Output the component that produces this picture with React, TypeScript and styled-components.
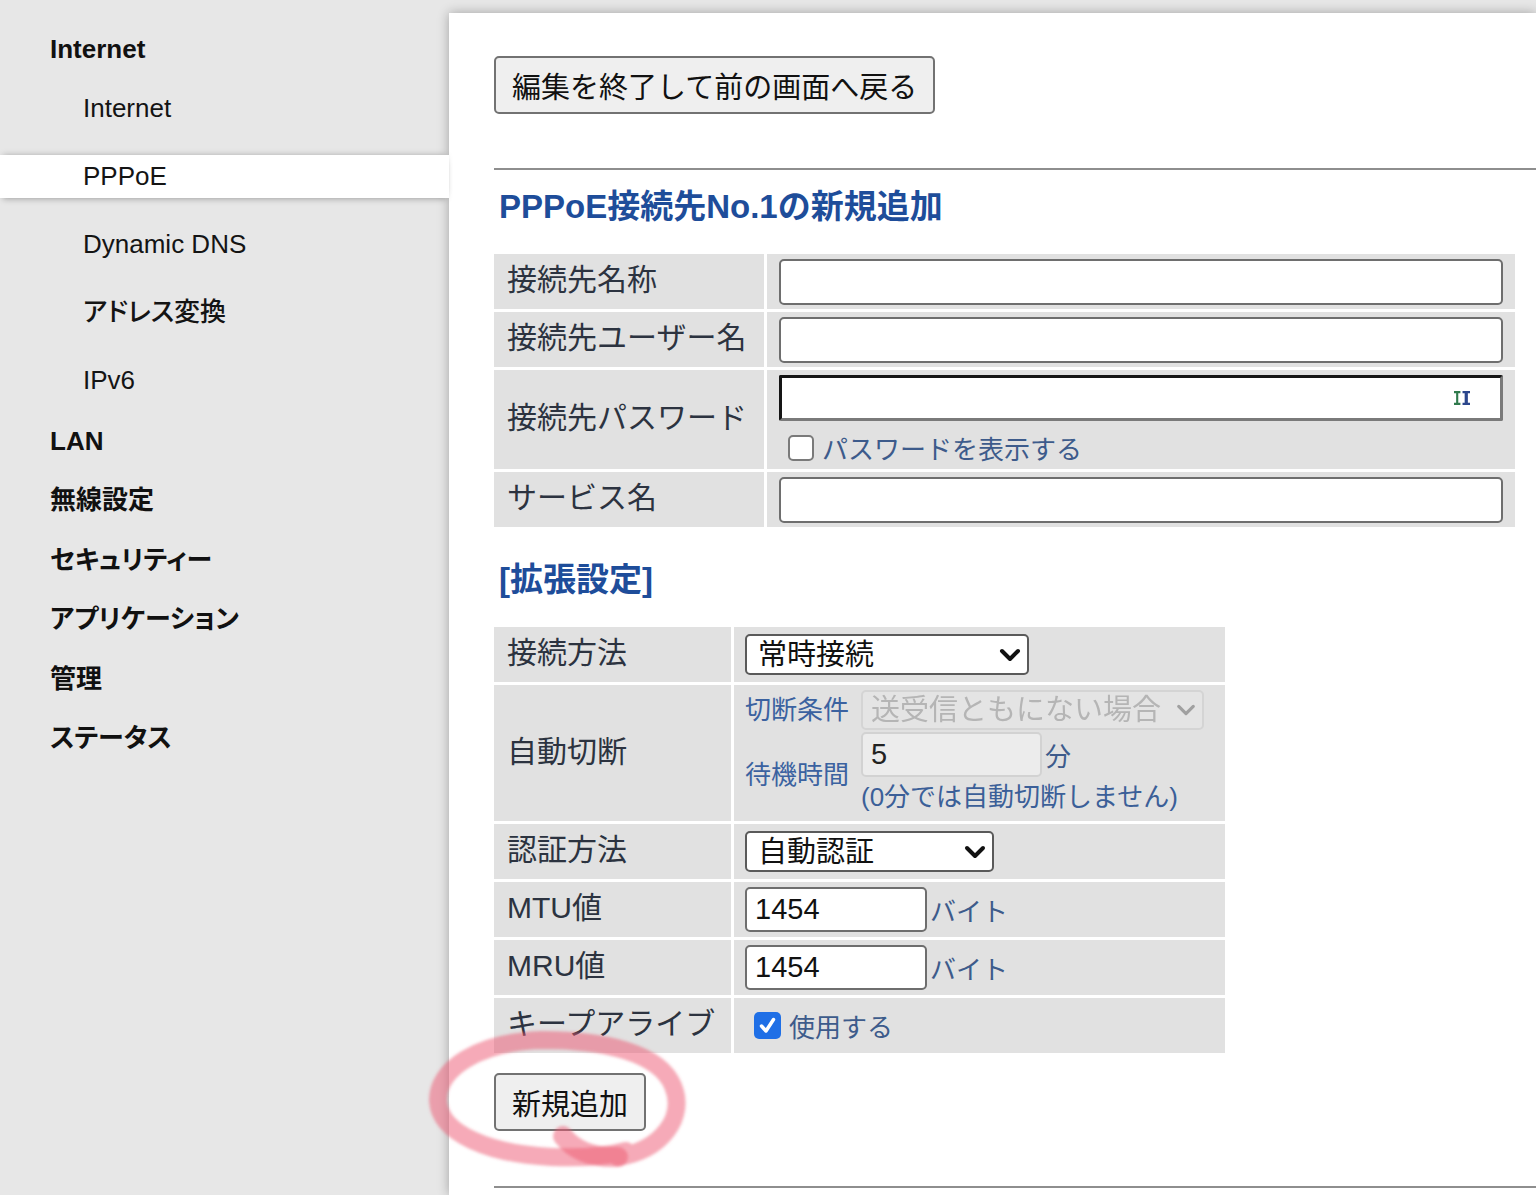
import React from 'react'
import styled, { createGlobalStyle, css } from 'styled-components'

const FONT = `'Liberation Sans', 'Noto Sans CJK JP', sans-serif`

const GlobalStyle = createGlobalStyle`
  html, body { margin: 0; height: 100%; }
  body {
    background: #e7e7e7;
    font-family: ${FONT};
    color: #111;
    overflow: hidden;
  }
  * { box-sizing: border-box; }
`

const Page = styled.div`
  display: flex;
  min-height: 100vh;
  position: relative;
`

/* ---------- side menu ---------- */

const Sidebar = styled.nav`
  width: 449px;
  flex-shrink: 0;
  padding-top: 20px;
  position: relative;
  z-index: 2;
  font-feature-settings: 'palt';
`

const GroupTitle = styled.div`
  height: 59.5px;
  line-height: 59.5px;
  padding-left: 50px;
  font-size: 26px;
  font-weight: 700;
  color: #111;
`

const SubList = styled.div`
  display: flex;
  flex-direction: column;
  gap: 25px;
  margin: 7px 0 10px;
`

const SubItem = styled.div<{ $active?: boolean }>`
  height: 43px;
  line-height: 43px;
  padding-left: 83px;
  font-size: 26px;
  font-weight: 500;
  color: #141414;
  ${p => p.$active && css`
    background: #fff;
    box-shadow: 0 4px 6px -3px rgba(0, 0, 0, 0.3), 0 -3px 6px -3px rgba(0, 0, 0, 0.25);
  `}
`

/* ---------- main panel ---------- */

const Main = styled.main`
  flex: 1;
  margin-top: 13px;
  min-height: calc(100vh - 13px);
  background: #fff;
  box-shadow: 0 0 11px rgba(0, 0, 0, 0.3);
  padding: 43px 0 0 45px;
  position: relative;
  z-index: 1;
`

const PushButton = styled.button`
  height: 58px;
  padding: 0 16px;
  font-family: ${FONT};
  font-size: 29px;
  color: #111;
  background: #efefef;
  border: 2px solid #727272;
  border-radius: 5px;
`

const Rule = styled.hr<{ $top: number }>`
  margin: ${p => p.$top}px 0 0;
  height: 0;
  border: 0;
  border-top: 2px solid #8e8e8e;
`

const SectionTitle = styled.h2<{ $top: number }>`
  margin: ${p => p.$top}px 0 0 5px;
  font-size: 33px;
  line-height: 40px;
  font-weight: 700;
  color: #1e4d9a;
`

const FormGrid = styled.div<{ $cols: string; $rows: string; $width: number }>`
  display: grid;
  grid-template-columns: ${p => p.$cols};
  grid-template-rows: ${p => p.$rows};
  gap: 3px;
  width: ${p => p.$width}px;
  margin-top: 27px;
`

const LabelCell = styled.div`
  display: flex;
  align-items: center;
  padding: 0 0 3px 13px;
  background: #e1e1e1;
  font-size: 30px;
  line-height: 1;
  color: #2c3340;
  white-space: nowrap;
`

const ValueCell = styled.div<{ $pad?: number; $column?: boolean }>`
  display: flex;
  align-items: center;
  padding: 0 ${p => p.$pad ?? 12}px;
  background: #e1e1e1;
  ${p => p.$column && css`
    flex-direction: column;
    align-items: stretch;
    justify-content: flex-start;
    padding-top: 5px;
    gap: 8px;
  `}
`

const TextField = styled.input<{ $width?: number; $height?: number }>`
  width: ${p => (p.$width ? `${p.$width}px` : '100%')};
  height: ${p => p.$height ?? 46}px;
  border: 2px solid #6e6e6e;
  border-radius: 5px;
  background: #fff;
  padding: 0 8px;
  font-family: ${FONT};
  font-size: 29px;
  color: #111;
  &:disabled {
    background: #ececec;
    border-color: #d2d2d2;
    color: #222;
  }
`

const PasswordWrap = styled.div`
  position: relative;
  height: 46px;
`

const PasswordField = styled.input`
  width: 100%;
  height: 100%;
  border: 3px solid;
  border-color: #151515 #7a7a7a #7a7a7a #151515;
  border-radius: 2px;
  background: #fff;
`

const KeyIcon = styled.svg`
  position: absolute;
  right: 33px;
  top: 16px;
`

const CheckRow = styled.label`
  display: flex;
  align-items: center;
  gap: 8px;
  padding-left: 9px;
  font-size: 26px;
  color: #3d5b8b;
`

const CheckBox = styled.span<{ $checked?: boolean }>`
  width: ${p => (p.$checked ? 27 : 26)}px;
  height: ${p => (p.$checked ? 27 : 26)}px;
  border-radius: 5px;
  display: inline-flex;
  align-items: center;
  justify-content: center;
  ${p => p.$checked
    ? css`background: #1f6fe6;`
    : css`background: #fff; border: 2px solid #7a7a7a;`}
`

const SelectWrap = styled.div<{ $width: number; $height: number }>`
  position: relative;
  width: ${p => p.$width}px;
  height: ${p => p.$height}px;
`

const NativeSelect = styled.select`
  appearance: none;
  width: 100%;
  height: 100%;
  border: 2px solid #5a5a5a;
  border-radius: 5px;
  background: #fff;
  padding: 0 40px 0 11px;
  font-family: ${FONT};
  font-size: 29px;
  color: #111;
  &:disabled {
    background: #e6e6e6;
    border-color: #cfcfcf;
    color: #a3a3a3;
    padding-left: 8px;
  }
`

const Chevron = styled.svg`
  position: absolute;
  right: 8px;
  top: 50%;
  transform: translateY(-50%);
  pointer-events: none;
`

const CutoffGrid = styled.div`
  display: grid;
  grid-template-columns: 104px auto;
  column-gap: 12px;
  row-gap: 2px;
  align-items: center;
  padding: 5px 0 4px;
`

const SubLabel = styled.span`
  font-size: 26px;
  line-height: 1;
  color: #3b62a0;
  white-space: nowrap;
`

const InlineRow = styled.div`
  display: flex;
  align-items: center;
  gap: 3px;
`

const Unit = styled.span`
  font-size: 26px;
  color: #3d5b8b;
`

const Note = styled.div`
  font-size: 26px;
  line-height: 40px;
  color: #3b5f98;
  white-space: nowrap;
`

const Annotation = styled.svg`
  position: absolute;
  left: 420px;
  top: 1020px;
  pointer-events: none;
  z-index: 3;
`

function Select({ value, width, height, disabled }: { value: string; width: number; height: number; disabled?: boolean }) {
  return (
    <SelectWrap $width={width} $height={height}>
      <NativeSelect disabled={disabled} defaultValue={value}>
        <option>{value}</option>
      </NativeSelect>
      <Chevron width={disabled ? 20 : 22} height={disabled ? 13 : 14} viewBox="0 0 22 14">
        <path d="M3 3 L11 11 L19 3" fill="none" stroke={disabled ? '#a0a0a0' : '#111'} strokeWidth={disabled ? 3.5 : 4} strokeLinecap="round" strokeLinejoin="round" />
      </Chevron>
    </SelectWrap>
  )
}

const subMenu = ['Internet', 'PPPoE', 'Dynamic DNS', 'アドレス変換', 'IPv6']
const topMenu = ['LAN', '無線設定', 'セキュリティー', 'アプリケーション', '管理', 'ステータス']

export default function App() {
  return (
    <>
      <GlobalStyle />
      <Page>
        <Sidebar>
          <GroupTitle>Internet</GroupTitle>
          <SubList>
            {subMenu.map(item => (
              <SubItem key={item} $active={item === 'PPPoE'}>{item}</SubItem>
            ))}
          </SubList>
          {topMenu.map(item => (
            <GroupTitle key={item}>{item}</GroupTitle>
          ))}
        </Sidebar>

        <Main>
          <PushButton>編集を終了して前の画面へ戻る</PushButton>
          <Rule $top={54} />
          <SectionTitle $top={17}>PPPoE接続先No.1の新規追加</SectionTitle>

          <FormGrid $cols="270px 1fr" $rows="55px 55px 99px 55px" $width={1021}>
            <LabelCell>接続先名称</LabelCell>
            <ValueCell><TextField /></ValueCell>
            <LabelCell>接続先ユーザー名</LabelCell>
            <ValueCell><TextField /></ValueCell>
            <LabelCell>接続先パスワード</LabelCell>
            <ValueCell $column>
              <PasswordWrap>
                <PasswordField type="password" />
                <KeyIcon width="16" height="14" viewBox="0 0 15 13">
                  <path d="M0 0h6v2H4v9h2v2H0v-2h2V2H0z" fill="#2f7a4c" />
                  <path d="M8 0h7v2h-2v9h2v2H8v-2h2V2H8z" fill="#2b468c" />
                </KeyIcon>
              </PasswordWrap>
              <CheckRow>
                <CheckBox />
                パスワードを表示する
              </CheckRow>
            </ValueCell>
            <LabelCell>サービス名</LabelCell>
            <ValueCell><TextField /></ValueCell>
          </FormGrid>

          <SectionTitle $top={33}>[拡張設定]</SectionTitle>

          <FormGrid $cols="237px 491px" $rows="55px 136px 55px 55px 55px 55px" $width={731}>
            <LabelCell>接続方法</LabelCell>
            <ValueCell $pad={11}><Select value="常時接続" width={284} height={41} /></ValueCell>

            <LabelCell>自動切断</LabelCell>
            <ValueCell $pad={11}>
              <CutoffGrid>
                <SubLabel>切断条件</SubLabel>
                <Select value="送受信ともにない場合" width={343} height={40} disabled />
                <SubLabel>待機時間</SubLabel>
                <div>
                  <InlineRow>
                    <TextField $width={181} $height={45} defaultValue="5" disabled />
                    <Unit>分</Unit>
                  </InlineRow>
                  <Note>(0分では自動切断しません)</Note>
                </div>
              </CutoffGrid>
            </ValueCell>

            <LabelCell>認証方法</LabelCell>
            <ValueCell $pad={11}><Select value="自動認証" width={249} height={41} /></ValueCell>

            <LabelCell>MTU値</LabelCell>
            <ValueCell $pad={11}>
              <InlineRow>
                <TextField $width={182} $height={45} defaultValue="1454" />
                <Unit>バイト</Unit>
              </InlineRow>
            </ValueCell>

            <LabelCell>MRU値</LabelCell>
            <ValueCell $pad={11}>
              <InlineRow>
                <TextField $width={182} $height={45} defaultValue="1454" />
                <Unit>バイト</Unit>
              </InlineRow>
            </ValueCell>

            <LabelCell>キープアライブ</LabelCell>
            <ValueCell $pad={11}>
              <CheckRow>
                <CheckBox $checked>
                  <svg width="19" height="19" viewBox="0 0 19 19">
                    <path d="M3.5 10 L8 15 L15.5 3.5" fill="none" stroke="#fff" strokeWidth="3.5" strokeLinecap="round" strokeLinejoin="round" />
                  </svg>
                </CheckBox>
                使用する
              </CheckRow>
            </ValueCell>
          </FormGrid>

          <PushButton style={{ marginTop: 20 }}>新規追加</PushButton>
          <Rule $top={55} />
        </Main>

        {/* hand-drawn highlight around the add button */}
        <Annotation width="280" height="170" viewBox="420 1020 280 170">
          <defs>
            <filter id="soft" x="-10%" y="-10%" width="120%" height="120%">
              <feGaussianBlur stdDeviation="1.5" />
            </filter>
          </defs>
          <g filter="url(#soft)" fill="none" strokeLinecap="round" strokeLinejoin="round">
            <path
              d="M563 1136 C574 1150 592 1158 618 1157"
              stroke="rgba(238, 88, 112, 0.5)"
              strokeWidth="20"
            />
            <path
              d="M618 1157 C662 1150 686 1117 673 1086 C659 1052 602 1040 542 1040 C478 1042 437 1069 438 1101 C440 1134 490 1154 552 1157 C578 1158 604 1157 626 1151"
              stroke="rgba(238, 88, 112, 0.5)"
              strokeWidth="18"
            />
          </g>
        </Annotation>
      </Page>
    </>
  )
}
